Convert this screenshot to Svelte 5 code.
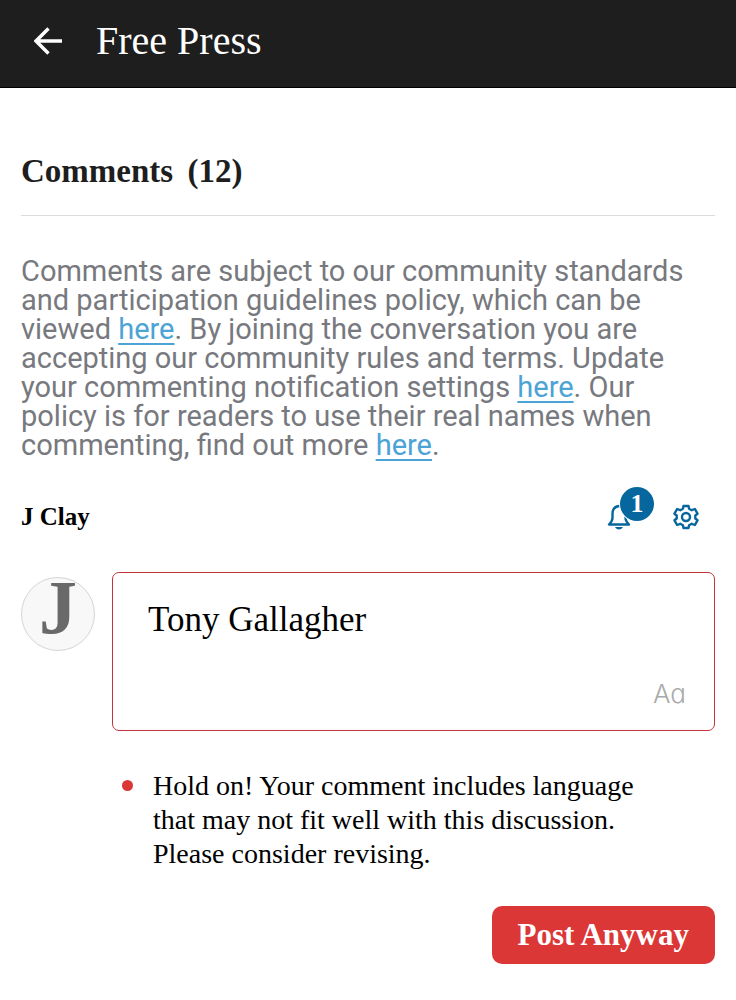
<script>
	let comment = 'Tony Gallagher';
	let commentCount = 12;
	let notifications = 1;
	let userName = 'J Clay';
</script>

<header class="topbar">
	<button class="icon-button" type="button" aria-label="Back">
		<svg width="28" height="28" viewBox="0 0 28 28" fill="none" stroke="#fff" stroke-width="3.4">
			<path d="M28 14H2.5M14.5 1.5L2 14l12.5 12.5" />
		</svg>
	</button>
	<span class="title">Free Press</span>
</header>

<main>
	<h1>Comments <span class="count">({commentCount})</span></h1>

	<p class="policy">
		Comments are subject to our community standards and participation guidelines policy, which can
		be viewed <a href="#standards">here</a>. By joining the conversation you are accepting our
		community rules and terms. Update your commenting notification settings
		<a href="#settings">here</a>. Our policy is for readers to use their real names when commenting,
		find out more <a href="#policy">here</a>.
	</p>

	<div class="user-row">
		<span class="user-name">{userName}</span>
		<button class="icon-button bell" type="button" aria-label="Notifications">
			<svg width="24" height="26" viewBox="0 0 24 26" fill="none" stroke="#06679f" stroke-width="2.4">
				<path
					d="M12 2C7.5 2.5 5.5 6 5.500 10v4c0 2-1 4-3.500 6.500h20c-2.500-2.500-3.500-4.500-3.500-6.500v-4C18.500 6 16.500 2.500 12 2z"
					stroke-linejoin="round"
				/>
				<path d="M8 23h8c-.8 1.500-2.200 2.500-4 2.500s-3.200-1-4-2.500z" fill="#06679f" stroke="none" />
			</svg>
			<span class="badge">{notifications}</span>
		</button>
		<button class="icon-button" type="button" aria-label="Settings">
			<svg
				width="26"
				height="26"
				viewBox="0 0 26 26"
				fill="none"
				stroke="#06679f"
				stroke-width="2.4"
				stroke-linejoin="round"
			>
				<path
					d="M10.500 2h5l.6 2.800 2.600 1.400 3.200-1.200 2.600 4.700-2.200 1.800v3l2.200 1.800-2.600 4.700-3.200-1.200-2.600 1.400-.6 2.800h-5l-.6-2.800-2.600-1.400-3.200 1.200-2.600-4.700 2.200-1.800v-3L1.500 9.700 4.100 5l3.200 1.200 2.600-1.400z"
				/>
				<circle cx="13" cy="13" r="4" />
			</svg>
		</button>
	</div>

	<form class="composer" on:submit|preventDefault>
		<div class="avatar" aria-hidden="true">{userName[0]}</div>
		<div class="editor">
			<textarea bind:value={comment} rows="1" aria-label="Comment" spellcheck="false"></textarea>
			<button class="format" type="button" aria-label="Text formatting">Aa</button>
		</div>
		<ul class="warning">
			<li>
				Hold on! Your comment includes language that may not fit well with this discussion. Please
				consider revising.
			</li>
		</ul>
		<button class="submit" type="submit">Post Anyway</button>
	</form>
</main>

<style>
	:global(body) {
		margin: 0;
		background: #fff;
		color: #000;
		font-family: 'Liberation Serif', 'Times New Roman', serif;
	}

	button,
	textarea {
		border: 0;
		padding: 0;
		background: none;
		color: inherit;
		font-family: inherit;
	}

	button {
		cursor: pointer;
	}

	svg {
		display: block;
	}

	.topbar {
		display: flex;
		align-items: center;
		gap: 34px;
		height: 88px;
		padding: 0 34px 6px;
		box-sizing: border-box;
		background: #1e1e1e;
		border-bottom: 1px solid #000;
		color: #fff;
	}

	.title {
		font-size: 40px;
		line-height: 48px;
	}

	main {
		padding: 59px 21px 36px;
	}

	h1 {
		margin: 0;
		padding-bottom: 20px;
		border-bottom: 1px solid #dcdcdc;
		color: #1e1e1e;
		font-size: 33px;
		line-height: 48px;
	}

	.count {
		margin-left: 6px;
	}

	.policy {
		margin: 41px 0 40px;
		color: #77797e;
		font-family: Roboto, sans-serif;
		font-size: 29px;
		line-height: 29px;
	}

	.policy a {
		color: #4ba3d6;
		text-decoration-thickness: 2px;
		text-underline-offset: 4px;
	}

	.user-row {
		display: flex;
		align-items: center;
		gap: 42px;
		padding-right: 16px;
	}

	.user-name {
		flex: 1;
		font-size: 25px;
		font-weight: bold;
		line-height: 34px;
	}

	.bell {
		position: relative;
	}

	.badge {
		position: absolute;
		left: 13px;
		bottom: 9px;
		width: 34px;
		height: 34px;
		border-radius: 50%;
		box-shadow: 0 0 0 1px #fff;
		background: #06679f;
		color: #fff;
		font-size: 26px;
		font-weight: bold;
		line-height: 34px;
		text-align: center;
	}

	.composer {
		display: grid;
		grid-template-columns: 74px 1fr;
		column-gap: 17px;
		margin-top: 38px;
	}

	.avatar {
		width: 74px;
		height: 74px;
		margin-top: 5px;
		box-sizing: border-box;
		border: 1px solid #d5d5d5;
		border-radius: 50%;
		background: #f8f8f8;
		color: #696969;
		font-size: 76px;
		font-weight: bold;
		line-height: 58px;
		text-align: center;
	}

	.editor {
		display: flex;
		flex-direction: column;
		padding: 26px 28px 18px 35px;
		border: 1px solid #c3343c;
		border-radius: 7px;
	}

	textarea {
		height: 42px;
		margin-bottom: 35px;
		outline: 0;
		overflow: hidden;
		resize: none;
		font-size: 35px;
		line-height: 42px;
	}

	.format {
		align-self: flex-end;
		color: #aaa;
		font-family: Inter, sans-serif;
		font-feature-settings: 'cv11';
		font-size: 26px;
		font-weight: 300;
		line-height: 36px;
	}

	.warning {
		grid-column: 2;
		margin: 38px 0 35px;
		padding: 0 48px 0 0;
		list-style: none;
		font-size: 28px;
		line-height: 34px;
	}

	.warning li {
		display: flex;
		gap: 20px;
	}

	.warning li::before {
		content: '';
		flex: none;
		width: 11px;
		height: 11px;
		margin: 11px 0 0 10px;
		border-radius: 50%;
		background: #db3737;
	}

	.submit {
		grid-column: 2;
		justify-self: end;
		padding: 8px 26px;
		border-radius: 10px;
		background: #db3737;
		color: #fff;
		font-size: 31px;
		font-weight: bold;
		line-height: 42px;
	}
</style>
